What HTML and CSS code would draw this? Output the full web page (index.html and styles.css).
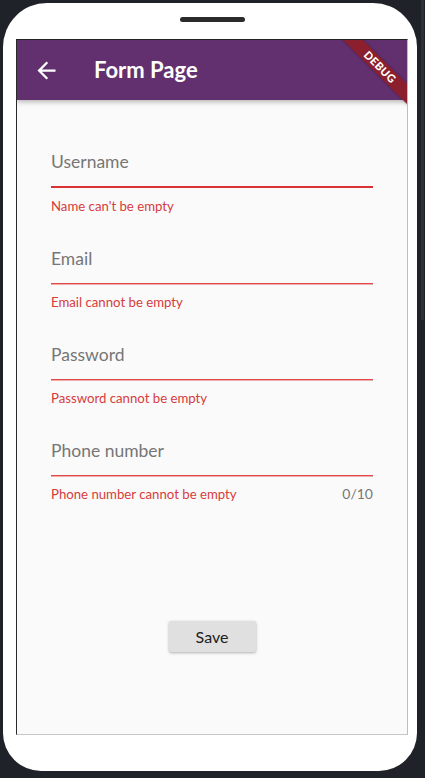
FILE: index.html
```html
<!DOCTYPE html>
<html lang="en">
<head>
<meta charset="utf-8">
<title>Form Page</title>
<link rel="stylesheet" href="styles.css">
</head>
<body>
<div class="phone">
  <div class="speaker-row"><span class="speaker"></span></div>
  <div class="screen">
    <header class="appbar">
      <svg class="back" viewBox="0 0 24 24" width="27" height="27" aria-hidden="true"><path fill="#fff" d="M20 11H7.83l5.59-5.59L12 4l-8 8 8 8 1.41-1.41L7.83 13H20v-2z"/></svg>
      <h1 class="title">Form Page</h1>
    </header>
    <form class="form">
      <div class="field focused">
        <div class="input"><span class="label">Username</span></div>
        <div class="help"><span class="error">Name can't be empty</span></div>
      </div>
      <div class="field">
        <div class="input"><span class="label">Email</span></div>
        <div class="help"><span class="error">Email cannot be empty</span></div>
      </div>
      <div class="field">
        <div class="input"><span class="label">Password</span></div>
        <div class="help"><span class="error">Password cannot be empty</span></div>
      </div>
      <div class="field">
        <div class="input"><span class="label">Phone number</span></div>
        <div class="help"><span class="error">Phone number cannot be empty</span><span class="counter">0/10</span></div>
      </div>
      <div class="actions"><button type="button" class="save">Save</button></div>
    </form>
    <div class="banner">DEBUG</div>
  </div>
</div>
<div class="scrollbar"></div>
</body>
</html>
```
FILE: styles.css
```css
html, body {
  margin: 0;
  padding: 0;
}
body {
  position: relative;
  width: 425px;
  height: 778px;
  overflow: hidden;
  background: #1f2228;
  font-family: "Lato", "Noto Sans", sans-serif;
}
.phone {
  box-sizing: border-box;
  width: 414px;
  height: 768px;
  margin: 3px 0 0 3px;
  background: #ffffff;
  border-radius: 44px 44px 38px 38px;
  display: flex;
  flex-direction: column;
}
.speaker-row {
  height: 36px;
  box-sizing: border-box;
  padding-top: 14px;
  display: flex;
  justify-content: center;
}
.speaker {
  display: block;
  width: 65px;
  height: 5px;
  margin-left: 4px;
  border-radius: 3px;
  background: #2b2b2b;
}
.screen {
  position: relative;
  overflow: hidden;
  box-sizing: border-box;
  width: 392px;
  height: 696px;
  margin-left: 13px;
  background: #fafafa;
  border-top: 1px solid #222;
  border-left: 1px solid #2a2a2a;
  border-right: 1px solid #bdbdbd;
  border-bottom: 1px solid #c6c6c6;
  display: flex;
  flex-direction: column;
}
.appbar {
  position: relative;
  z-index: 1;
  height: 60px;
  flex: none;
  background: #62306f;
  display: flex;
  align-items: center;
  box-shadow: 0 2px 5px rgba(0, 0, 0, 0.28);
}
.back {
  display: block;
  margin-left: 16px;
}
.title {
  margin: 0 0 0 34px;
  color: #fff;
  font-size: 22px;
  font-weight: 700;
  line-height: 1;
}
.form {
  padding: 38px 34px 0 34px;
  display: flex;
  flex-direction: column;
}
.field {
  margin-bottom: 21px;
}
.input {
  box-sizing: border-box;
  height: 49px;
  border-bottom: 1px solid #e04848;
  box-shadow: 0 1px 0 rgba(228, 110, 110, 0.55);
  display: flex;
  align-items: center;
}
.field.focused .input {
  height: 50px;
  border-bottom: 2px solid #d93232;
  box-shadow: none;
}
.label {
  color: #767676;
  font-size: 17.5px;
  line-height: 20px;
}
.help {
  padding-top: 10px;
  height: 16px;
  display: flex;
  justify-content: space-between;
  align-items: center;
  font-size: 13.2px;
  line-height: 16px;
}
.error {
  color: #d63c3c;
}
.counter {
  color: #767676;
  font-size: 14px;
}
.actions {
  margin-top: 98px;
  display: flex;
  justify-content: center;
}
.save {
  width: 87px;
  height: 31px;
  border: none;
  border-radius: 2px;
  background: #e0e0e0;
  color: #212121;
  font-family: "Lato", "Noto Sans", sans-serif;
  font-size: 16px;
  box-shadow: 0 1px 3px rgba(0, 0, 0, 0.3);
  padding: 0;
}
.banner {
  position: absolute;
  z-index: 2;
  top: 20px;
  right: -33px;
  width: 120px;
  height: 14px;
  transform: rotate(45deg);
  background: #8b1f2e;
  color: #fff;
  font-size: 11px;
  font-weight: 900;
  line-height: 14px;
  text-align: center;
  letter-spacing: 0.4px;
  box-shadow: 0 0 3px rgba(0, 0, 0, 0.3);
}
.scrollbar {
  position: absolute;
  top: 0;
  left: 421px;
  width: 3px;
  height: 320px;
  background: #2e3238;
}
```
